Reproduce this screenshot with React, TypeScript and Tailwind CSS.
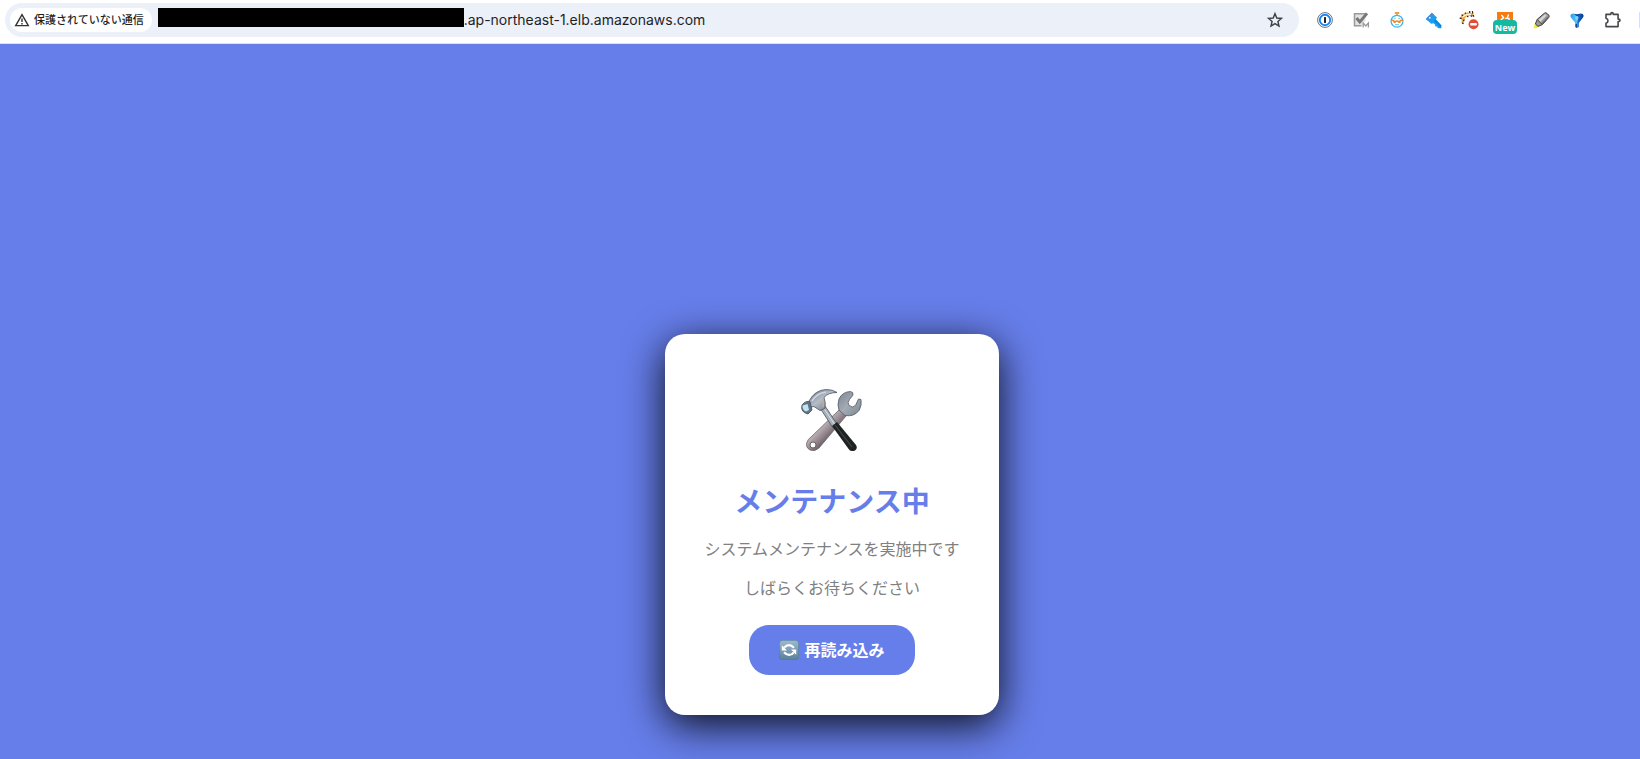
import React from "react";

function ToolButton({ label, children }: { label: string; children: React.ReactNode }) {
  return (
    <button type="button" aria-label={label} className="flex h-6 w-6 shrink-0 items-center justify-center">
      {children}
    </button>
  );
}

const Star = () => (
  <svg width="18" height="18" viewBox="0 0 24 24" fill="none" stroke="#3c4043" strokeWidth="1.9">
    <path d="M12 3.6l2.4 5.8 6.2.5-4.7 4.1 1.4 6.1-5.3-3.2-5.3 3.2 1.4-6.1-4.7-4.1 6.2-.5z" />
  </svg>
);

const PasswordRing = () => (
  <svg width="16" height="16" viewBox="0 0 16 16">
    <circle cx="8" cy="8" r="7.4" fill="#fff" stroke="#6b7178" strokeWidth="1" />
    <circle cx="8" cy="8" r="5.2" fill="#fff" stroke="#1a84f5" strokeWidth="1.9" />
    <rect x="7" y="5" width="2" height="6" rx=".5" fill="#222" />
  </svg>
);

const CheckM = () => (
  <svg width="17" height="16" viewBox="0 0 17 16">
    <path d="M1.5 1.8h11v8h-3v4h-8z" fill="#e3e3e3" />
    <path d="M12.5 1.8H1.5v12h7" fill="none" stroke="#999" strokeWidth="1.5" />
    <path d="M3.5 6l3.3 4L14 1.4" fill="none" stroke="#777" strokeWidth="3" />
    <path d="M10.2 15.4V11l2.6 3 2.6-3v4.4" fill="none" stroke="#999" strokeWidth="1.3" />
  </svg>
);

const Mascot = () => (
  <svg width="14" height="16" viewBox="0 0 14 16">
    <rect x="4.8" y="0" width="4.4" height="2" fill="#f29a45" />
    <path d="M7 1v2.2" stroke="#f29a45" strokeWidth="1.6" />
    <circle cx="7" cy="9.2" r="5.9" fill="#fff" stroke="#35b8ee" strokeWidth="1.3" />
    <path d="M4 6.6h1.6M8.4 6.6H10M5 12.6h4" stroke="#7fd0f2" strokeWidth="1.2" />
    <path d="M1 8.2h2l1.6 1.6L7 9l2.4.8L11 8.2h2" fill="none" stroke="#f28a2c" strokeWidth="1.6" />
    <path d="M3.6 10.2h2.2M8.2 10.2h2.2" stroke="#f28a2c" strokeWidth="1.6" />
  </svg>
);

const BlueKey = () => (
  <svg width="17" height="17" viewBox="0 0 17 17">
    <path d="M6.8.8L12 5.6 10.8 7.6l5.4 5.6v3h-3l-1.6-1.8-1.4-.2-.2-1.6-1.8-1.4-2 .6L.8 7z" fill="#1a9df2" />
    <path d="M6.8.8L.8 7l2 1.8L9 2.8z" fill="#4a8fd0" />
    <path d="M10.8 7.6l5.4 5.6v3L8.8 8.8z" fill="#0b86d8" />
    <circle cx="4.8" cy="5.8" r=".9" fill="#fff" />
  </svg>
);

const BlockedCat = () => (
  <svg width="20" height="20" viewBox="0 0 20 20">
    <path d="M1 8C2.4 4.4 6 2.2 10 2.4l4 1.2 1 3-4-.8C7.6 5.8 5.4 7.4 5.4 11l-1 2.4-2-.6.4-3.4z" fill="#efa945" />
    <path d="M3.4 7C5.4 4.8 8.6 4 12 4.4" stroke="#fff3dc" strokeWidth="1.2" fill="none" />
    <path d="M.6 8l2 .6M2.6 4.6l1.4 1.2M6 2.6l.8 1M10.6 1l.2 2M13.4 1.2l.4 2.4M3 13l1.6.6M5.4 9.6l-1.2 1.2M8 6.4l1.4.2M11.6 5.8l1.6.6M14 5l1 1.6" stroke="#29231b" strokeWidth="1.2" fill="none" />
    <circle cx="14.5" cy="14.3" r="5" fill="#e34c36" />
    <rect x="11.2" y="13.1" width="6.6" height="2.4" rx=".4" fill="#fff" />
  </svg>
);

const NewBadge = () => (
  <span className="relative block h-6 w-6">
    <svg className="absolute top-1 left-1" width="16" height="10" viewBox="0 0 16 10">
      <rect width="16" height="10" fill="#f57b14" />
      <path d="M4.4 3l2.2 2.6L3.8 8M11.6 2.4l-1.6 4M8 6.4h4v2" stroke="#fff" strokeWidth="1.4" fill="none" />
    </svg>
    <span className="absolute top-3 left-0 flex h-3.5 w-6 items-center justify-center rounded bg-[#16b8a0] font-['Open_Sans',sans-serif] text-[9px] leading-none font-bold text-white">
      New
    </span>
  </span>
);

const Marker = () => (
  <svg width="17" height="17" viewBox="0 0 17 17">
    <path d="M.6 16.2l1.2-4.6 3.4 3.2-1.8 1.4z" fill="#f2ec27" />
    <path d="M2.4 12L4.2 7.4 11.4 1.2q1.4-.8 2.4 0l2 2q.8 1.2 0 2.2L9.4 12.6 5 14.4z" fill="#9a9a9a" stroke="#3c3c3c" strokeWidth="1" />
    <path d="M5 8.2l7-6 1.6 1.4-6.4 6.6z" fill="#d6d6d6" />
    <path d="M9 12l6-6.6" stroke="#666" strokeWidth="1.4" />
    <path d="M4.4 7.6l4.4 4.6" stroke="#444" strokeWidth="1" />
  </svg>
);

const BlueGem = () => (
  <svg width="14" height="15" viewBox="0 0 14 15">
    <defs>
      <linearGradient id="gem" x1="0" y1="0" x2="1" y2="0">
        <stop offset="0" stopColor="#2a9df0" />
        <stop offset=".45" stopColor="#58c4fb" />
        <stop offset=".6" stopColor="#1566c4" />
        <stop offset="1" stopColor="#0a3a8c" />
      </linearGradient>
    </defs>
    <path d="M.4 2.6Q.8.4 3 .4L7 1.2 11 .4q2.2 0 2.6 2.2 0 1.2-.8 2.2L8.8 10v4L7 15l-1.6-1v-4L1.2 4.8Q.4 3.8.4 2.6z" fill="url(#gem)" />
    <path d="M4 1l3 2.6L10 1l-3 .6z" fill="#0b3f8e" />
    <path d="M5 4.4l2-1.6 1.6 1.6L7 8.6z" fill="#7ad6ff" />
    <path d="M5.4 10.4L7 11v4l-1.6-1z" fill="#0f4aa0" />
  </svg>
);

const Puzzle = () => (
  <svg width="18" height="18" viewBox="0 0 18 18" fill="none" stroke="#45484b" strokeWidth="1.6" strokeLinejoin="round">
    <path d="M2 3.4h4.8v-.6a1.2 1.2 0 012.4 0v.6h4.9v4.7h.7a1.2 1.2 0 010 2.4h-.7v5.1H2v-3.4q2-.6 2-2.5t-2-2.5z" />
  </svg>
);

const Tools = () => (
  <svg width="64" height="64" viewBox="0 0 64 64" role="img" aria-label="工具">
    <defs>
      <linearGradient id="steel" x1="0" y1="0" x2="1" y2="1">
        <stop offset="0" stopColor="#6a747e" />
        <stop offset=".45" stopColor="#b4bdc8" />
        <stop offset="1" stopColor="#5c626d" />
      </linearGradient>
      <linearGradient id="jaw" x1="0" y1="0" x2="1" y2="1">
        <stop offset="0" stopColor="#7d8791" />
        <stop offset=".5" stopColor="#a3abb5" />
        <stop offset="1" stopColor="#7c848e" />
      </linearGradient>
      <linearGradient id="handle" x1=".3" y1=".3" x2=".7" y2=".7">
        <stop offset="0" stopColor="#d6d0d6" />
        <stop offset=".5" stopColor="#9a8e94" />
        <stop offset="1" stopColor="#54474c" />
      </linearGradient>
    </defs>
    <path d="M39 22l7 6L19 60q-4 4-9 2-5-3-3-8 1-3 4-5z" fill="url(#handle)" stroke="#6c646a" strokeWidth=".8" />
    <path d="M50.5 3.5Q42 4 39 11q-2 6 0 11l6 5.500q9 1.500 14-5 3-5 2-11l-2.500-.5-3 6.500q-3 3-6.500 0-2-3 .5-6l3.500-4.500q.5-3-2.500-3.500z" fill="url(#jaw)" stroke="#5a636d" strokeWidth=".9" />
    <circle cx="13" cy="57" r="3" fill="#fff" stroke="#675e62" />
    <path d="M20 20l5-2 12 18-4 4z" fill="#a6afba" stroke="#4c535c" strokeWidth=".8" />
    <path d="M23 19l12 18" stroke="#e2e6ea" strokeWidth="1" />
    <path d="M32 38l5-4 19 23q2 3-1 5.500-4 1.500-6-1z" fill="#1e2223" />
    <path d="M35 37l17 22" stroke="#464a4b" strokeWidth="1.200" />
    <path d="M9 13Q15 2 26 1.500q7 0 11 3-9 0-13 5 2 5 1 11l-5 2-6-4-5 1z" fill="url(#steel)" stroke="#4c545d" strokeWidth=".8" />
    <path d="M12 13q5-8 14-9" fill="none" stroke="#cdd8e2" strokeWidth="1.500" />
    <path d="M22 11q2 4 1 8" fill="none" stroke="#c8ae94" strokeWidth="1.200" />
    <path d="M2 17q4-5 8-3l2 8-4 4q-8-2-6-9z" fill="#5f7686" stroke="#3f4a55" strokeWidth=".8" />
    <path d="M2.500 17.500l5-1.500 1.500 6-3 1.500q-4-2-3.500-6z" fill="#c4e2ef" />
  </svg>
);

const ReloadTile = () => (
  <svg width="20" height="20" viewBox="0 0 20 20" aria-hidden="true">
    <defs>
      <linearGradient id="tile" x1="0" y1="0" x2="0" y2="1">
        <stop offset="0" stopColor="#9dbbd0" />
        <stop offset="1" stopColor="#597f9b" />
      </linearGradient>
    </defs>
    <rect x=".3" y=".3" width="19.4" height="19.400" rx="3.200" fill="url(#tile)" stroke="#567890" strokeWidth=".6" />
    <path d="M5.200 7.600Q9.800 2.400 15 7.800M14.800 12.400Q10.200 17.600 5 12.200" fill="none" stroke="#fff" strokeWidth="2.200" />
    <path d="M2.800 5.200v5.200h5.200zM17.200 14.800V9.600H12z" fill="#fff" />
  </svg>
);

export default function App() {
  return (
    <div className="flex min-h-screen flex-col overflow-x-hidden bg-[#667eea] font-[Inter,'Noto_Sans_CJK_JP',sans-serif]">
      <header className="flex h-11 shrink-0 items-start border-b border-[#dfe3ea] bg-white pt-[3px] pl-[5px]">
        <div className="flex h-[34px] min-w-0 flex-1 items-center rounded-full bg-[#ebf0f9] pr-3 pl-[5px]">
          <button type="button" className="flex h-6 shrink-0 items-center gap-1 rounded-full bg-white pr-2 pl-1 text-[11px] font-medium text-[#1f1f1f]">
            <svg width="16" height="16" viewBox="0 0 16 16" fill="none" stroke="#333" strokeWidth="1.4">
              <path d="M8 2.6l6.3 11H1.700zM8 6.500v3.600M8 11v1.400" />
            </svg>
            保護されていない通信
          </button>
          <span className="mb-1.5 ml-1.5 h-[19px] w-[306px] shrink-0 bg-black" />
          <input
            aria-label="アドレス"
            defaultValue=".ap-northeast-1.elb.amazonaws.com"
            className="min-w-0 flex-1 bg-transparent pb-0.5 text-[14px] text-[#1f1f1f] outline-none"
          />
          <ToolButton label="ブックマーク"><Star /></ToolButton>
        </div>
        <div className="mt-[5px] ml-[14px] flex shrink-0 items-center gap-3 pr-[14px]">
          <ToolButton label="パスワード"><PasswordRing /></ToolButton>
          <ToolButton label="チェック"><CheckM /></ToolButton>
          <ToolButton label="アシスタント"><Mascot /></ToolButton>
          <ToolButton label="キー"><BlueKey /></ToolButton>
          <ToolButton label="ブロック"><BlockedCat /></ToolButton>
          <ToolButton label="新着"><NewBadge /></ToolButton>
          <ToolButton label="マーカー"><Marker /></ToolButton>
          <ToolButton label="フィルター"><BlueGem /></ToolButton>
          <ToolButton label="拡張機能"><Puzzle /></ToolButton>
        </div>
        <span className="mt-[9px] h-4 w-px shrink-0 bg-[#d3e0fb]" />
      </header>
      <main className="flex flex-1 items-start justify-center pt-[290px] pb-11 pl-6">
        <section className="flex flex-col items-center rounded-[20px] bg-white px-[39px] py-10 text-center shadow-[0_10px_40px_rgba(0,0,0,0.9)]">
          <div className="flex h-[92px] items-center"><Tools /></div>
          <h1 className="mt-4 text-[28px] leading-10 font-bold text-[#667eea]">メンテナンス中</h1>
          <p className="mt-[15px] text-[16px] leading-6 text-[#808080]">システムメンテナンスを実施中です</p>
          <p className="mt-[15px] text-[16px] leading-6 text-[#808080]">しばらくお待ちください</p>
          <button type="button" className="mt-[25px] flex h-[50px] items-center gap-[5px] rounded-[20px] bg-[#667eea] px-[30px] text-[16px] font-bold text-white">
            <ReloadTile />
            再読み込み
          </button>
        </section>
      </main>
    </div>
  );
}
